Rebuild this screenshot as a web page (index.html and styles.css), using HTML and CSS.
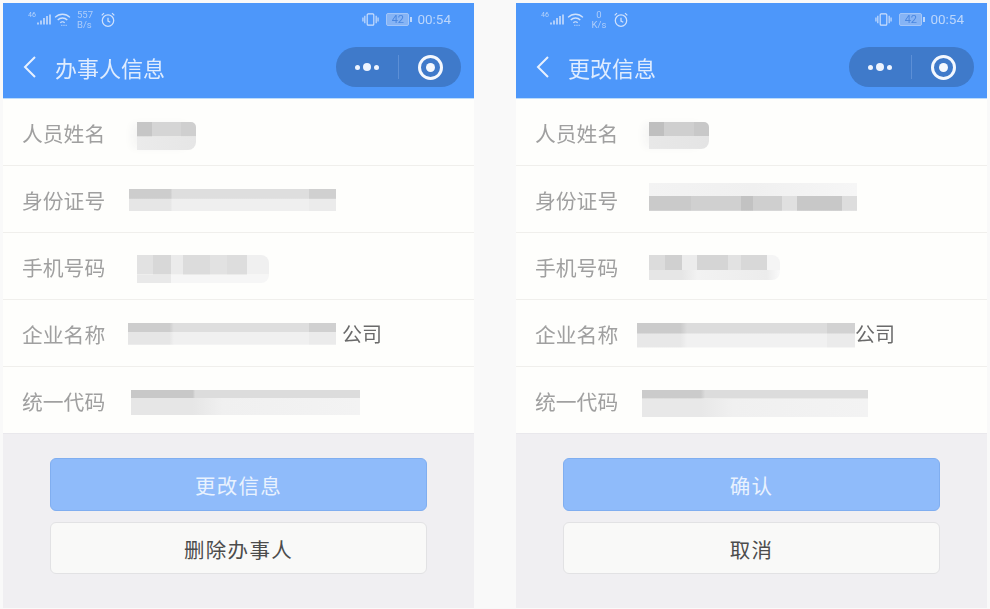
FILE: index.html
```html
<!DOCTYPE html>
<html lang="zh-CN">
<head>
<meta charset="utf-8">
<title>办事人信息</title>
<link rel="stylesheet" href="styles.css">
</head>
<body>
<main class="screens">
  <section class="phone">
    <header class="top">
      <div class="status">
        <div class="status-left">
          <span class="net">46</span>
          <svg class="signal" viewBox="0 0 14 12"><path d="M1 11v-2M4 11V7M7 11V4.500M10 11V2.500M13 11V1"/></svg>
          <svg class="wifi" viewBox="0 0 16 14"><path d="M1 5c4-4 10-4 14 0M3.500 7.500c2.500-2.500 6.500-2.500 9 0M6 10c1-1 3-1 4 0"/><path class="dots" d="M7 12.500h.8M9 12.500h.8M11 12.500h.8"/></svg>
          <span class="speed">557<br>B/s</span>
          <svg class="clock" viewBox="0 0 14 14"><circle cx="7" cy="7.500" r="5"/><path d="M7 5v3l2 1M1.500 3 3.500 1M12.500 3l-2-2"/></svg>
        </div>
        <div class="status-right">
          <svg class="vibrate" viewBox="0 0 18 14"><rect x="5.500" y="1" width="7" height="12" rx="1"/><path d="M3 3v8M1 5v4M15 3v8M17 5v4"/></svg>
          <span class="battery">42</span><span class="battery-tip"></span>
          <span class="time">00:54</span>
        </div>
      </div>
      <nav class="nav">
        <svg class="back" viewBox="0 0 14 24"><path d="M12 2 2 12l10 10"/></svg>
        <h1 class="title">办事人信息</h1>
        <div class="capsule">
          <div class="more"><i class="dot"></i><i class="dot big"></i><i class="dot"></i></div>
          <span class="sep"></span>
          <div class="close"><i class="ring"></i></div>
        </div>
      </nav>
    </header>
    <div class="list">
      <div class="row"><span class="label">人员姓名</span><span class="mask a1"></span></div>
      <div class="row"><span class="label">身份证号</span><span class="mask a2"></span></div>
      <div class="row"><span class="label">手机号码</span><span class="mask a3"></span></div>
      <div class="row"><span class="label">企业名称</span><span class="mask a4"></span><span class="value a4v">公司</span></div>
      <div class="row"><span class="label">统一代码</span><span class="mask a5"></span></div>
    </div>
    <div class="actions">
      <button class="btn primary">更改信息</button>
      <button class="btn plain">删除办事人</button>
    </div>
  </section>

  <section class="phone">
    <header class="top">
      <div class="status">
        <div class="status-left">
          <span class="net">46</span>
          <svg class="signal" viewBox="0 0 14 12"><path d="M1 11v-2M4 11V7M7 11V4.500M10 11V2.500M13 11V1"/></svg>
          <svg class="wifi" viewBox="0 0 16 14"><path d="M1 5c4-4 10-4 14 0M3.500 7.500c2.500-2.500 6.500-2.500 9 0M6 10c1-1 3-1 4 0"/><path class="dots" d="M7 12.500h.8M9 12.500h.8M11 12.500h.8"/></svg>
          <span class="speed center">0<br>K/s</span>
          <svg class="clock" viewBox="0 0 14 14"><circle cx="7" cy="7.500" r="5"/><path d="M7 5v3l2 1M1.500 3 3.500 1M12.500 3l-2-2"/></svg>
        </div>
        <div class="status-right">
          <svg class="vibrate" viewBox="0 0 18 14"><rect x="5.500" y="1" width="7" height="12" rx="1"/><path d="M3 3v8M1 5v4M15 3v8M17 5v4"/></svg>
          <span class="battery">42</span><span class="battery-tip"></span>
          <span class="time">00:54</span>
        </div>
      </div>
      <nav class="nav">
        <svg class="back" viewBox="0 0 14 24"><path d="M12 2 2 12l10 10"/></svg>
        <h1 class="title">更改信息</h1>
        <div class="capsule">
          <div class="more"><i class="dot"></i><i class="dot big"></i><i class="dot"></i></div>
          <span class="sep"></span>
          <div class="close"><i class="ring"></i></div>
        </div>
      </nav>
    </header>
    <div class="list">
      <div class="row"><span class="label">人员姓名</span><span class="mask b1"></span></div>
      <div class="row"><span class="label">身份证号</span><span class="mask b2"></span></div>
      <div class="row"><span class="label">手机号码</span><span class="mask b3"></span></div>
      <div class="row"><span class="label">企业名称</span><span class="mask b4"></span><span class="value b4v">公司</span></div>
      <div class="row"><span class="label">统一代码</span><span class="mask b5"></span></div>
    </div>
    <div class="actions">
      <button class="btn primary">确认</button>
      <button class="btn plain">取消</button>
    </div>
  </section>
</main>
</body>
</html>
```

FILE: styles.css
```css
* { box-sizing: border-box; }
html, body { margin: 0; height: 100%; }
body {
  background: #f9f9f9;
  font-family: "Noto Sans CJK SC", "Noto Sans", sans-serif;
  overflow: hidden;
}
.screens {
  display: flex;
  gap: 42px;
  padding: 3px 0 1px 3px;
  height: 609px;
}
.phone {
  width: 471px;
  display: flex;
  flex-direction: column;
  background: #f0eff2;
}

/* header */
.top {
  height: 96px;
  flex: none;
  background: #4d97fa;
  border-bottom: 1px solid #bcdcfb;
  color: #fff;
}
.status {
  height: 32px;
  display: flex;
  justify-content: space-between;
  align-items: center;
  padding: 1px 23px 0 25px;
  color: #b6d3fa;
  filter: blur(.35px);
}
.status-left, .status-right { display: flex; align-items: center; }
.net { font: 7px/1 "Roboto", sans-serif; margin: -8px 0 0 0; width: 9px; }
.signal { width: 14px; height: 13px; margin: 0 3px 0 0; fill: none; stroke: #cfe1fc; stroke-width: 1.500; }
.wifi { width: 17px; height: 15px; margin-right: 6px; fill: none; stroke: #cfe1fc; stroke-width: 1.300; }
.wifi .dots { stroke-width: 1; }
.speed { font: 9.500px/10px "Roboto", sans-serif; width: 18px; margin-right: 5px; color: #aecdf9; }
.speed.center { text-align: center; }
.clock { width: 16px; height: 16px; fill: none; stroke: #cfe1fc; stroke-width: 1.100; }
.vibrate { width: 17px; height: 15px; margin-right: 7px; fill: none; stroke: #cfe1fc; stroke-width: 1.200; }
.battery {
  width: 23px; height: 13px;
  border: 1px solid #a3c6f8;
  border-radius: 2px;
  background: #86b4f5;
  color: #4a87e0;
  font: 11px/11px "Roboto", sans-serif;
  text-align: center;
}
.battery-tip { width: 2px; height: 5px; background: #bcd6fa; margin: 0 5px 0 1px; }
.time { font: 13.500px/1 "Roboto", sans-serif; color: #bcd6fb; }

.nav {
  height: 63px;
  display: flex;
  align-items: center;
  padding: 0 13px 0 20px;
}
.back { width: 14px; height: 24px; fill: none; stroke: #e8f1fe; stroke-width: 2; margin-right: 18px; }
.title {
  margin: 0;
  flex: 1;
  font-size: 22px;
  font-weight: 400;
  line-height: 1;
  color: #dfecfe;
  filter: blur(.35px);
}
.capsule {
  width: 125px;
  height: 40px;
  border-radius: 20px;
  background: #3f7aca;
  display: flex;
  align-items: center;
}
.more { width: 62px; display: flex; justify-content: center; align-items: center; gap: 3px; padding-top: 1px; }
.dot { width: 5px; height: 5px; border-radius: 50%; background: #eef4fe; }
.dot.big { width: 8px; height: 8px; }
.sep { width: 1px; height: 24px; background: #5c8fd6; }
.close { flex: 1; display: flex; justify-content: center; padding: 1px 0 0 1px; }
.ring {
  width: 25px; height: 25px;
  border-radius: 50%;
  border: 3.500px solid #f4f8fe;
  display: flex;
  align-items: center;
  justify-content: center;
}
.ring::after { content: ""; width: 9px; height: 9px; border-radius: 50%; background: #f4f8fe; }

/* list */
.list {
  height: 334px;
  flex: none;
  display: flex;
  flex-direction: column;
  background: #fefefc;
}
.row {
  flex: 1 1 0;
  min-height: 0;
  display: flex;
  align-items: flex-start;
  border-bottom: 1.500px solid #f0efec;
  padding-left: 19px;
}
.row:last-child { border-bottom: none; }
.label {
  flex: none;
  width: 83px;
  white-space: nowrap;
  font-size: 20.800px;
  line-height: 68px;
  height: 66px;
  color: #a0a0a0;
  filter: blur(.35px);
}
.value {
  font-size: 20px;
  line-height: 68px;
  height: 66px;
  color: #6a6a6a;
  filter: blur(.3px);
}
.a4v { margin-left: 6px; }
.b4v { margin-left: 0; }

/* blurred masks */
.mask {
  display: block;
  flex: none;
  filter: blur(.6px);
  background-repeat: no-repeat;
  background-size: 100% 52%, 100% 48%;
  background-position: top, bottom;
}
.a1 {
  margin: 23px 0 0 32px; width: 59px; height: 28px; border-radius: 0 5px 8px 0;
  box-shadow: -7px 0 8px -2px #f5f5f4;
  background-image:
    linear-gradient(90deg, #c6c6c6 25%, #d5d5d5 25% 75%, #cfcfcf 75%),
    linear-gradient(90deg, #ebebeb, #e6e6e6);
}
.a2 {
  margin: 23px 0 0 24px; width: 207px; height: 22px;
  background-size: 100% 45%, 100% 55%;
  background-image:
    linear-gradient(90deg, #cdcdcd 20%, #dedede 21% 87%, #d0d0d0 87%),
    linear-gradient(90deg, #e6e6e6 20%, #efefef 21% 87%, #ebebeb 87%);
}
.a3 {
  margin: 22px 0 0 32px; width: 132px; height: 28px; border-radius: 0 8px 8px 0;
  background-size: 100% 70%, 100% 30%;
  background-image:
    linear-gradient(90deg, #e2e2e2 12%, #d8d8d8 12% 26%, #ebebeb 26% 35%, #dcdcdc 35% 55%, #e2e2e2 55% 68%, #dddddd 68% 83%, #f0f0f0 83%),
    linear-gradient(90deg, #e9e9e9 26%, #f6f6f6 26%);
}
.a4 {
  margin: 22.500px 0 0 23px; width: 208px; height: 22px;
  background-size: 100% 42%, 100% 58%;
  background-image:
    linear-gradient(90deg, #cdcdcd 20%, #dedede 22% 87%, #d0d0d0 87%),
    linear-gradient(90deg, #e6e6e6 20%, #f0f0f0 22% 87%, #ebebeb 87%);
}
.a5 {
  margin: 23px 0 0 26px; width: 229px; height: 25px;
  background-size: 100% 32%, 100% 68%;
  background-image:
    linear-gradient(90deg, #c8c8c8 27%, #dcdcdc 28%),
    linear-gradient(90deg, #e6e6e6 27%, #f0f0f0 40%, #f3f3f3);
}
.b1 {
  margin: 23px 0 0 31px; width: 60px; height: 27px; border-radius: 0 5px 8px 0;
  box-shadow: -7px 0 8px -2px #f5f5f4;
  background-image:
    linear-gradient(90deg, #bfbfbf 25%, #cfcfcf 25% 75%, #c8c8c8 75%),
    linear-gradient(90deg, #e8e8e8, #e4e4e4);
}
.b2 {
  margin: 17px 0 0 31px; width: 208px; height: 28px;
  background-size: 100% 47%, 100% 53%;
  background-image:
    linear-gradient(90deg, #f3f3f3, #f0f0f0 50%, #f6f6f6),
    linear-gradient(90deg, #cacaca 20%, #d0d0d0 20% 44%, #c2c2c2 44% 50%, #cfcfcf 50% 64%, #e0e0e0 64% 71%, #c8c8c8 71% 93%, #dddddd 93%);
}
.b3 {
  margin: 22px 0 0 31px; width: 131px; height: 25px; border-radius: 0 8px 8px 0;
  background-size: 100% 60%, 100% 40%;
  background-image:
    linear-gradient(90deg, #dcdcdc 12%, #d0d0d0 12% 25%, #ececec 25% 37%, #d5d5d5 37% 60%, #e2e2e2 60% 70%, #d8d8d8 70% 90%, #f5f5f5 90%),
    linear-gradient(90deg, #e6e6e6 25%, #f2f2f2 37%, #ececec 90%, #fafafa);
}
.b4 {
  margin: 22.500px 0 0 19px; width: 218px; height: 25px;
  background-size: 100% 42%, 100% 58%;
  background-image:
    linear-gradient(90deg, #cbcbcb 20%, #dcdcdc 23% 87%, #d2d2d2 87%),
    linear-gradient(90deg, #e8e8e8 20%, #f1f1f1 23% 87%, #ebebeb 87%);
}
.b5 {
  margin: 23px 0 0 24px; width: 226px; height: 27px;
  background-size: 100% 32%, 100% 68%;
  background-image:
    linear-gradient(90deg, #cbcbcb 26%, #dcdcdc 28%),
    linear-gradient(90deg, #e8e8e8 26%, #f0f0f0 40%, #f3f3f3);
}

/* buttons */
.actions {
  flex: 1;
  display: flex;
  flex-direction: column;
  gap: 11px;
  padding: 24px 47px 0;
  border-top: 1px solid #e9e8ec;
}
.btn {
  width: 377px;
  flex: none;
  font-family: inherit;
  font-size: 20.500px;
  letter-spacing: 1.300px;
  padding: 2px 0 0;
  border-radius: 6px;
  line-height: 1;
}
.primary {
  height: 53px;
  background: #8fbbfa;
  border: 1px solid #80aef0;
  color: #e9f2fe;
}
.plain {
  height: 52px;
  background: #f9f9f8;
  border: 1px solid #e2e2e4;
  color: #4c4c4c;
}
```
